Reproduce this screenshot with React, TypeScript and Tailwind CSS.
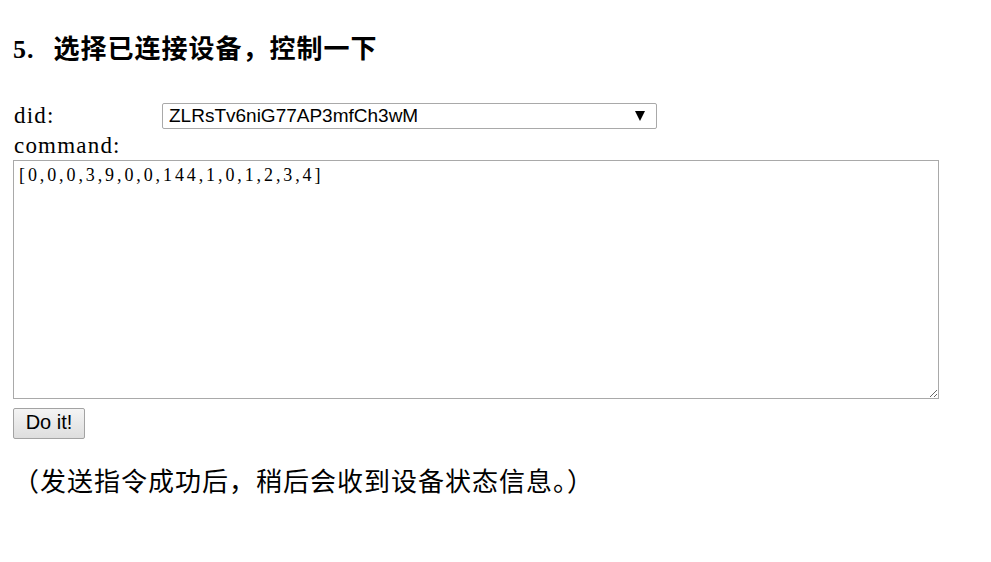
import React from 'react';

const serif = "font-['Liberation_Serif','Noto_Sans_CJK_SC',serif]";

export default function App() {
  return (
    <div className="min-h-[562px] w-[991px] bg-white px-[13px] pt-[34px] text-black">
      <h3 className={`${serif} flex text-[26px] font-semibold leading-[32px] tracking-[1px]`}>
        <span className="mr-[19px]">5.</span>
        <span>选择已连接设备，控制一下</span>
      </h3>

      <div className="mt-[36px] flex items-center">
        <span className={`${serif} w-[149px] pl-px text-[23px] leading-[28px] tracking-[1.2px]`}>did:</span>
        <div className="relative">
          <select
            defaultValue="ZLRsTv6niG77AP3mfCh3wM"
            className="h-[26px] w-[495px] appearance-none rounded-[2px] border border-[#a9a9a9] bg-white pl-[6px] font-['Liberation_Sans',Arial,sans-serif] text-[19px] leading-[24px] text-black outline-none"
          >
            <option>ZLRsTv6niG77AP3mfCh3wM</option>
          </select>
          <span className="pointer-events-none absolute right-[12px] top-[8px] h-0 w-0 border-x-[5px] border-t-[10px] border-x-transparent border-t-black" />
        </div>
      </div>

      <div className={`${serif} mt-[2px] pl-px text-[23px] leading-[28px] tracking-[1.2px]`}>command:</div>

      <textarea
        defaultValue="[0,0,0,3,9,0,0,144,1,0,1,2,3,4]"
        className={`${serif} block h-[239px] w-[926px] border border-[#a9a9a9] px-[5px] py-[2px] text-[18px] leading-[24px] tracking-[2.9px] text-black outline-none`}
      />

      <button className="mt-[9px] h-[31px] w-[72px] rounded-[2px] border border-[#a3a3a3] bg-gradient-to-b from-[#f4f4f4] to-[#dedede] pb-[3px] font-['Liberation_Sans',Arial,sans-serif] text-[20px] leading-[24px] text-black">
        Do it!
      </button>

      <p className="mt-[25px] font-['Noto_Sans_CJK_SC',sans-serif] text-[26px] leading-[32px] tracking-[1px]">
        （发送指令成功后，稍后会收到设备状态信息。）
      </p>
    </div>
  );
}
